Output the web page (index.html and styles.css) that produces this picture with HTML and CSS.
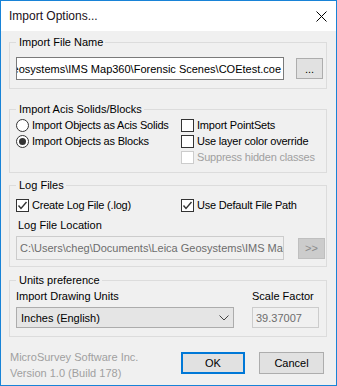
FILE: index.html
```html
<!DOCTYPE html>
<html lang="en">
<head>
    <meta charset="UTF-8">
    <title>Import Options...</title>
    <link rel="stylesheet" href="styles.css">
</head>
<body>

<div class="window">
    <!-- Title bar -->
    <div class="titlebar">
        <span class="title">Import Options...</span>
        <svg class="close" width="11" height="11" viewBox="0 0 11 11">
            <path d="M0.5 0.5 L10.5 10.5 M10.5 0.5 L0.5 10.5" stroke="#000" stroke-width="1" fill="none"/>
        </svg>
    </div>

    <div class="content">
        <fieldset class="group group-file">
            <legend>Import File Name</legend>
            <div class="file-row">
                <div class="textbox textbox-end"><span>C:\Users\cheg\Documents\Leica Geosystems\IMS Map360\Forensic Scenes\COEtest.coe</span></div>
                <button class="btn btn-browse">...</button>
            </div>
        </fieldset>

        <fieldset class="group group-acis">
            <legend>Import Acis Solids/Blocks</legend>
            <div class="options">
                <label class="option"><span class="radio"></span>Import Objects as Acis Solids</label>
                <label class="option"><span class="checkbox"></span>Import PointSets</label>
                <label class="option"><span class="radio checked"></span>Import Objects as Blocks</label>
                <label class="option"><span class="checkbox"></span>Use layer color override</label>
                <label class="option option-right disabled"><span class="checkbox"></span>Suppress hidden classes</label>
            </div>
        </fieldset>

        <fieldset class="group group-log">
            <legend>Log Files</legend>
            <div class="options">
                <label class="option"><span class="checkbox"><svg width="11" height="11" viewBox="0 0 11 11"><path d="M1.5 5.5 L4 8.5 L9.5 2" stroke="#333" stroke-width="1.4" fill="none"/></svg></span>Create Log File (.log)</label>
                <label class="option"><span class="checkbox"><svg width="11" height="11" viewBox="0 0 11 11"><path d="M1.5 5.5 L4 8.5 L9.5 2" stroke="#333" stroke-width="1.4" fill="none"/></svg></span>Use Default File Path</label>
            </div>
            <div class="field-label">Log File Location</div>
            <div class="file-row">
                <div class="textbox textbox-disabled"><span>C:\Users\cheg\Documents\Leica Geosystems\IMS Map360\Logs</span></div>
                <button class="btn btn-more" disabled>&gt;&gt;</button>
            </div>
        </fieldset>

        <fieldset class="group group-units">
            <legend>Units preference</legend>
            <div class="units">
                <div class="units-col">
                    <div class="units-label">Import Drawing Units</div>
                    <div class="select">
                        <span>Inches (English)</span>
                        <svg width="10" height="6" viewBox="0 0 10 6"><path d="M0.5 0.5 L5 5 L9.5 0.5" stroke="#444" stroke-width="1" fill="none"/></svg>
                    </div>
                </div>
                <div class="units-col">
                    <div class="units-label">Scale Factor</div>
                    <div class="scale-box">39.37007</div>
                </div>
            </div>
        </fieldset>

        <div class="footer">
            <div class="about">
                <div>MicroSurvey Software Inc.</div>
                <div>Version 1.0 (Build 178)</div>
            </div>
            <div class="actions">
                <button class="btn btn-ok">OK</button>
                <button class="btn btn-cancel">Cancel</button>
            </div>
        </div>
    </div>
</div>

</body>
</html>
```

FILE: styles.css
```css
body {
    margin: 0;
    font-family: "Liberation Sans", Arial, sans-serif;
    font-size: 11px;
    color: #000;
}

.window {
    width: 337px;
    height: 386px;
    box-sizing: border-box;
    border: 1px solid #1883d7;
    background-color: #f0f0f0;
    display: flex;
    flex-direction: column;
}

.titlebar {
    height: 30px;
    flex-shrink: 0;
    background-color: #fff;
    display: flex;
    align-items: center;
    justify-content: space-between;
    padding: 0 9px 0 8px;
}

.title {
    font-size: 12px;
    color: #1a1020;
}

.content {
    padding: 5px 9px 0 8px;
}

/* Group boxes */
.group {
    margin: 0;
    min-width: 0;
    border: 1px solid #dcdcdc;
    padding: 8px 0 8px 6px;
}

.group legend {
    padding: 0 2px 0 3px;
    line-height: 13px;
}

.group-acis {
    margin-top: 14px;
    padding-top: 1px;
    padding-bottom: 7px;
}

.group-log {
    margin-top: 6px;
    padding-top: 5px;
    padding-bottom: 6px;
}

.group-units {
    margin-top: 7px;
    padding-top: 3px;
    padding-bottom: 8px;
}

.file-row {
    display: flex;
    align-items: center;
}

.textbox {
    width: 268px;
    height: 23px;
    flex-shrink: 0;
    box-sizing: border-box;
    border: 1px solid #7a7a7a;
    background-color: #fff;
    display: flex;
    align-items: center;
    overflow: hidden;
    white-space: nowrap;
    padding: 0 2px;
}

.textbox-end {
    justify-content: flex-end;
}

.textbox-disabled {
    height: 24px;
    border-color: #cccccc;
    background-color: #f0f0f0;
    color: #6d6d6d;
    padding-left: 3px;
}

.btn {
    font-family: inherit;
    font-size: 11px;
    color: #000;
    background-color: #e1e1e1;
    border: 1px solid #adadad;
    padding: 0;
    box-sizing: border-box;
    flex-shrink: 0;
}

.btn-browse {
    width: 27px;
    height: 21px;
    margin-left: 12px;
}

.btn-more {
    width: 27px;
    height: 21px;
    margin-left: 14px;
    background-color: #cccccc;
    border-color: #bfbfbf;
    color: #8a8a8a;
}

/* Radio / checkbox rows */
.options {
    display: grid;
    grid-template-columns: 165px 1fr;
    grid-auto-rows: 16px;
}

.option {
    display: flex;
    align-items: center;
    white-space: nowrap;
    letter-spacing: -0.2px;
}

.option-right {
    grid-column: 2;
}

.option.disabled {
    color: #a0a0a0;
}

.radio,
.checkbox {
    width: 13px;
    height: 13px;
    box-sizing: border-box;
    border: 1px solid #333;
    background-color: #fff;
    margin-right: 3px;
    flex-shrink: 0;
    display: flex;
    align-items: center;
    justify-content: center;
}

.radio {
    border-radius: 50%;
}

.radio.checked::after {
    content: "";
    width: 7px;
    height: 7px;
    border-radius: 50%;
    background-color: #333;
}

.disabled .checkbox {
    border-color: #cccccc;
}

.field-label {
    line-height: 13px;
    margin: 6px 0 4px 2px;
}

/* Units */
.units {
    display: flex;
    gap: 18px;
}

.units-label {
    line-height: 13px;
    margin-bottom: 4px;
}

.select {
    width: 218px;
    height: 21px;
    box-sizing: border-box;
    border: 1px solid #acacac;
    background-color: #e5e5e5;
    display: flex;
    align-items: center;
    justify-content: space-between;
    padding: 0 4px 0 4px;
}

.scale-box {
    width: 67px;
    height: 21px;
    box-sizing: border-box;
    border: 1px solid #cccccc;
    background-color: #f0f0f0;
    color: #6d6d6d;
    display: flex;
    align-items: center;
    padding-left: 3px;
}

/* Footer */
.footer {
    display: flex;
    justify-content: space-between;
    margin-top: 12px;
    padding: 0 3px 0 1px;
}

.about {
    color: #a0a0a0;
    line-height: 16px;
}

.actions {
    display: flex;
    gap: 14px;
    margin-top: 3px;
}

.btn-ok {
    width: 64px;
    height: 22px;
    border: 2px solid #0078d7;
}

.btn-cancel {
    width: 65px;
    height: 22px;
}
```
